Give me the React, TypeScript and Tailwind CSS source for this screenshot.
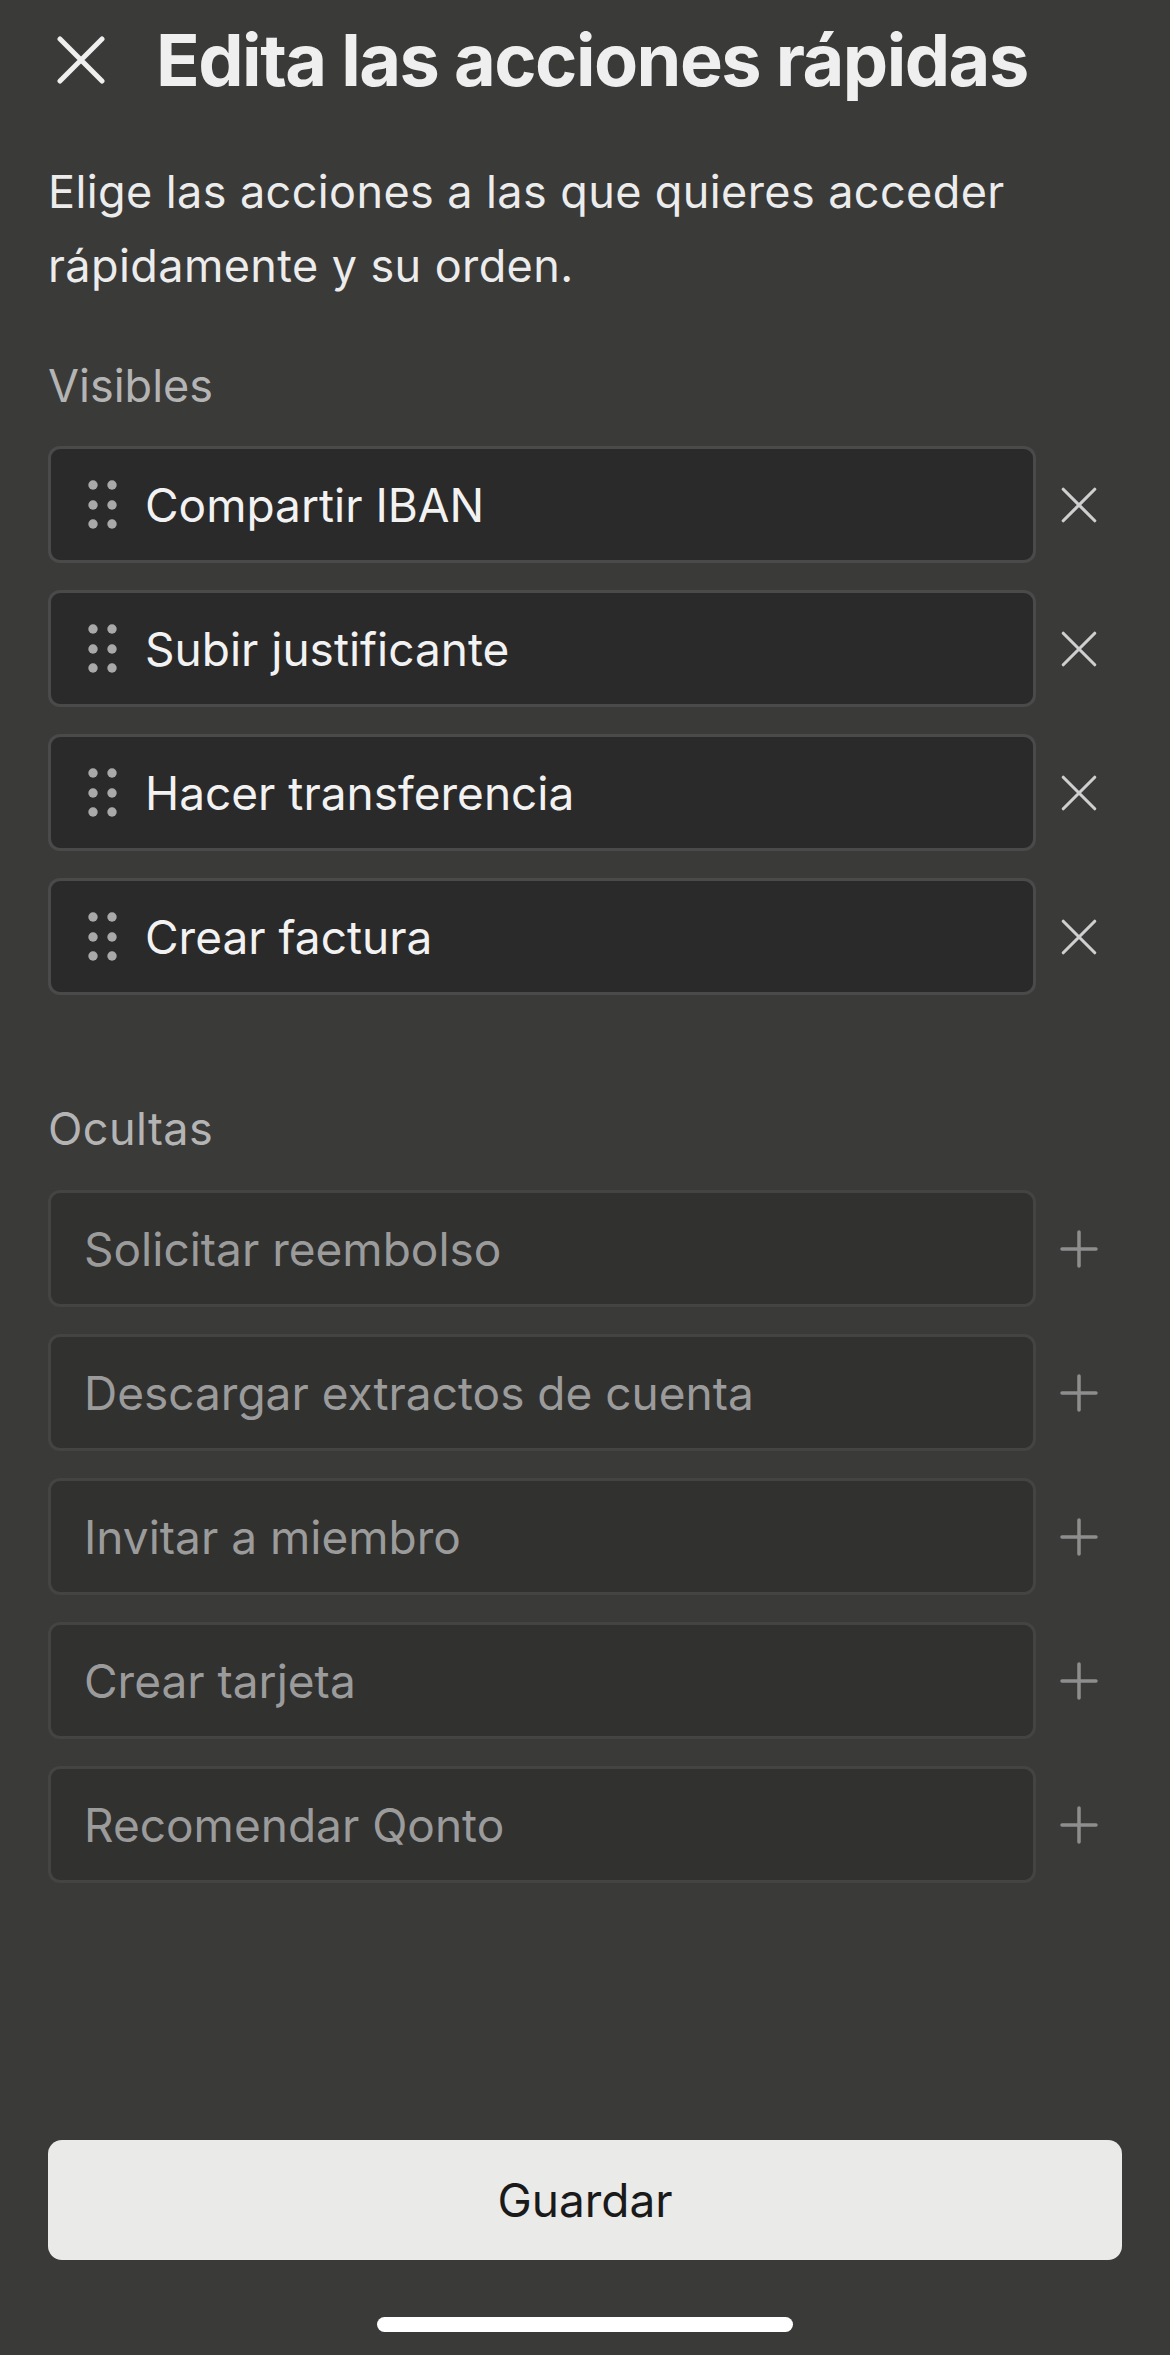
import React from 'react';

const visibles = ['Compartir IBAN', 'Subir justificante', 'Hacer transferencia', 'Crear factura'];
const ocultas = [
  'Solicitar reembolso',
  'Descargar extractos de cuenta',
  'Invitar a miembro',
  'Crear tarjeta',
  'Recomendar Qonto',
];

function CloseIcon({ size, stroke, color }: { size: number; stroke: number; color: string }) {
  return (
    <svg width={size} height={size} viewBox="0 0 48 48" fill="none">
      <path d="M3 3L45 45M45 3L3 45" stroke={color} strokeWidth={stroke} strokeLinecap="round" />
    </svg>
  );
}

function PlusIcon() {
  return (
    <svg width="38" height="38" viewBox="0 0 38 38" fill="none">
      <path d="M19 2V36M2 19H36" stroke="#8e8e8e" strokeWidth="3.5" strokeLinecap="round" />
    </svg>
  );
}

function DragDots() {
  return (
    <svg width="30" height="50" viewBox="0 0 30 50" fill="#a9a9a9">
      <circle cx="5" cy="5" r="4.7" />
      <circle cx="24" cy="5" r="4.7" />
      <circle cx="5" cy="25" r="4.7" />
      <circle cx="24" cy="25" r="4.7" />
      <circle cx="5" cy="44" r="4.7" />
      <circle cx="24" cy="44" r="4.7" />
    </svg>
  );
}

export default function App() {
  return (
    <div
      className="h-[2355px] w-[1170px] bg-[#3a3a39] px-[48px] flex flex-col"
      style={{ fontFamily: 'Inter, "Noto Sans", sans-serif' }}
    >
      {/* Header */}
      <div className="h-[120px] flex items-center">
        <div className="w-[108px] pl-[9px] flex items-center">
          <CloseIcon size={48} stroke={5} color="#efefef" />
        </div>
        <h1 className="text-[72px] font-bold text-[#efefef] tracking-[-1.5px] leading-none">
          Edita las acciones rápidas
        </h1>
      </div>

      {/* Intro */}
      <p className="mt-[35px] text-[45px] tracking-[0.4px] leading-[74px] text-[#ececec]">
        Elige las acciones a las que quieres acceder rápidamente y su orden.
      </p>

      {/* Visibles */}
      <h2 className="mt-[53px] text-[45px] leading-[60px] text-[#b4b4b4]">Visibles</h2>
      <div className="mt-[30px] flex flex-col gap-[27px]">
        {visibles.map((label) => (
          <div key={label} className="flex items-center">
            <div className="flex-1 h-[117px] flex items-center border-[3px] border-[#4a4a4a] rounded-[12px] bg-[#2a2a2a] pl-[37px]">
              <DragDots />
              <span className="ml-[27px] text-[46px] text-[#f2f2f2] leading-none">{label}</span>
            </div>
            <div className="w-[86px] flex justify-center">
              <CloseIcon size={36} stroke={4.2} color="#cfcfcf" />
            </div>
          </div>
        ))}
      </div>

      {/* Ocultas */}
      <h2 className="mt-[104px] text-[45px] tracking-[0.4px] leading-[60px] text-[#b4b4b4]">Ocultas</h2>
      <div className="mt-[31px] flex flex-col gap-[27px]">
        {ocultas.map((label) => (
          <div key={label} className="flex items-center">
            <div className="flex-1 h-[117px] flex items-center border-[3px] border-[#444443] rounded-[12px] bg-[#313130] pl-[33px]">
              <span className="text-[46px] text-[#9b9b9b] leading-none">{label}</span>
            </div>
            <div className="w-[86px] flex justify-center">
              <PlusIcon />
            </div>
          </div>
        ))}
      </div>

      {/* Guardar */}
      <button className="mt-[257px] h-[120px] w-full rounded-[14px] bg-[#eaeae9] text-[46px] text-[#1a1a1a]">
        Guardar
      </button>

      {/* Home indicator */}
      <div className="mt-[57px] flex justify-center">
        <div className="h-[15px] w-[416px] rounded-full bg-white" />
      </div>
    </div>
  );
}
